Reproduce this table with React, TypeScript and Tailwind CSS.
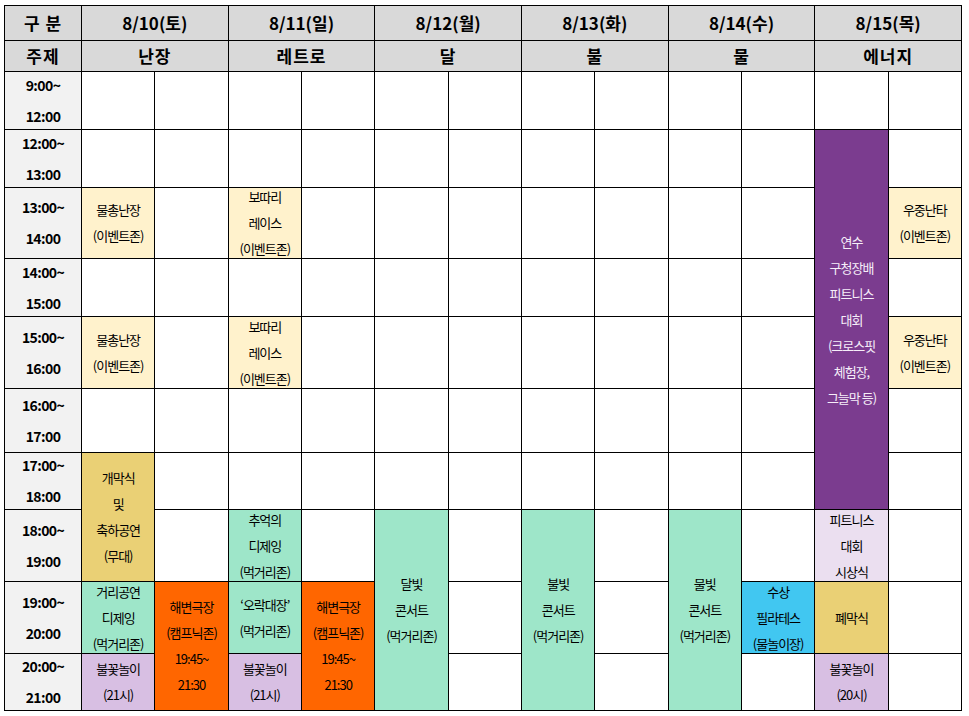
import React from 'react';

type Cell = { lines?: string[]; bg?: string; span?: string; text?: string };

const yellow = 'bg-[#fff2cc]';
const gold = 'bg-[#ead075]';
const mint = 'bg-[#9ee6c9]';
const orange = 'bg-[#ff6600]';
const lilac = 'bg-[#d8bfe3]';
const lavender = 'bg-[#ebdff0]';
const cyan = 'bg-[#41c7f1]';
const purple = 'bg-[#7b3c8f]';

const empty = (n: number): Cell[] => Array.from({ length: n }, () => ({}));

const mulchong: Cell = { lines: ['물총난장', '(이벤트존)'], bg: yellow };
const bottari: Cell = { lines: ['보따리', '레이스', '(이벤트존)'], bg: yellow };
const ujung: Cell = { lines: ['우중난타', '(이벤트존)'], bg: yellow };
const theater: Cell = { lines: ['해변극장', '(캠프닉존)', '19:45~', '21:30'], bg: orange, span: 'row-span-2' };

const times = [
  ['9:00~', '12:00'],
  ['12:00~', '13:00'],
  ['13:00~', '14:00'],
  ['14:00~', '15:00'],
  ['15:00~', '16:00'],
  ['16:00~', '17:00'],
  ['17:00~', '18:00'],
  ['18:00~', '19:00'],
  ['19:00~', '20:00'],
  ['20:00~', '21:00'],
];

// cells that start in each time row, left to right (covered cells are skipped)
const rows: Cell[][] = [
  empty(12),
  [
    ...empty(10),
    {
      lines: ['연수', '구청장배', '피트니스', '대회', '(크로스핏', '체험장,', '그늘막 등)'],
      bg: purple,
      span: 'row-span-6',
      text: 'text-[#f6eef9]',
    },
    ...empty(1),
  ],
  [mulchong, {}, bottari, ...empty(7), ujung],
  empty(11),
  [mulchong, {}, bottari, ...empty(7), ujung],
  empty(11),
  [{ lines: ['개막식', '및', '축하공연', '(무대)'], bg: gold, span: 'row-span-2' }, ...empty(9), {}],
  [
    {},
    { lines: ['추억의', '디제잉', '(먹거리존)'], bg: mint },
    {},
    { lines: ['달빛', '콘서트', '(먹거리존)'], bg: mint, span: 'row-span-3' },
    {},
    { lines: ['불빛', '콘서트', '(먹거리존)'], bg: mint, span: 'row-span-3' },
    {},
    { lines: ['물빛', '콘서트', '(먹거리존)'], bg: mint, span: 'row-span-3' },
    {},
    { lines: ['피트니스', '대회', '시상식'], bg: lavender },
    {},
  ],
  [
    { lines: ['거리공연', '디제잉', '(먹거리존)'], bg: mint },
    theater,
    { lines: ['‘오락대장’', '(먹거리존)'], bg: mint },
    theater,
    {},
    {},
    { lines: ['수상', '필라테스', '(물놀이장)'], bg: cyan },
    { lines: ['폐막식'], bg: gold },
    {},
  ],
  [
    { lines: ['불꽃놀이', '(21시)'], bg: lilac },
    { lines: ['불꽃놀이', '(21시)'], bg: lilac },
    {},
    {},
    {},
    { lines: ['불꽃놀이', '(20시)'], bg: lilac },
    {},
  ],
];

const days = ['8/10(토)', '8/11(일)', '8/12(월)', '8/13(화)', '8/14(수)', '8/15(목)'];
const themes = ['난장', '레트로', '달', '불', '물', '에너지'];

const Head: React.FC<{ children: React.ReactNode; span?: boolean }> = ({ children, span }) => (
  <div
    className={`${span ? 'col-span-2' : ''} bg-[#d9d9d9] flex items-center justify-center text-[17px] font-bold text-black tracking-[1px]`}
  >
    {children}
  </div>
);

const App: React.FC = () => {
  return (
    <div className="min-h-screen bg-white font-['Noto_Sans_CJK_KR','Noto_Sans',sans-serif]">
      <div className="ml-1 pt-[5px]">
        <div className="w-[958px] grid gap-px p-px bg-black grid-cols-[76px_repeat(12,minmax(0,1fr))] grid-rows-[34px_30px_57px_57px_70px_57px_71px_63px_56px_71px_71px_56px]">
          <Head>구 분</Head>
          {days.map((d) => (
            <Head key={d} span>
              <span className="tracking-normal">{d}</span>
            </Head>
          ))}
          <Head>주제</Head>
          {themes.map((t) => (
            <Head key={t} span>
              {t}
            </Head>
          ))}

          {rows.map((row, r) => (
            <React.Fragment key={r}>
              <div className="bg-[#f2f2f2] flex flex-col items-center justify-center text-[14px] font-bold leading-[31px] tracking-[-0.6px] text-black">
                <span>{times[r][0]}</span>
                <span>{times[r][1]}</span>
              </div>
              {row.map((c, i) => (
                <div
                  key={i}
                  className={`${c.span ?? ''} ${c.bg ?? 'bg-white'} ${c.text ?? 'text-black'} overflow-hidden flex flex-col items-center justify-center text-center text-[13px] leading-[26px] tracking-[-1px] whitespace-nowrap`}
                >
                  {c.lines?.map((l, j) => <span key={j}>{l}</span>)}
                </div>
              ))}
            </React.Fragment>
          ))}
        </div>
      </div>
    </div>
  );
};

export default App;
